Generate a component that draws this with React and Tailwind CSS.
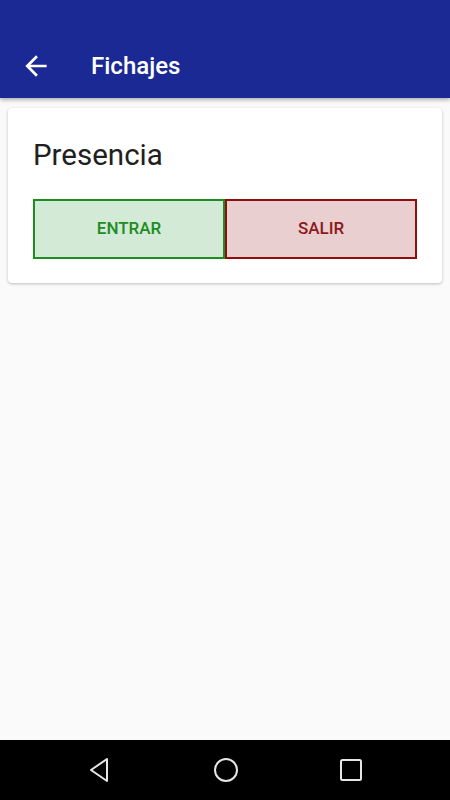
export default function App() {
  return (
    <div className="flex h-[800px] w-[450px] flex-col bg-[#fafafa] font-['Roboto',sans-serif]">
      {/* App bar */}
      <header className="relative z-10 flex h-[98px] shrink-0 items-center bg-[#1a2994] pt-[33px] shadow-[0_2px_4px_rgba(0,0,0,0.3)]">
        <svg viewBox="0 0 24 24" className="ml-[20px] h-[32px] w-[32px] fill-white">
          <path d="M20 11H7.83l5.59-5.59L12 4l-8 8 8 8 1.41-1.41L7.83 13H20v-2z" />
        </svg>
        <h1 className="ml-[39px] font-['Roboto_Medium','Roboto',sans-serif] text-[24px] font-medium leading-[28px] text-white">
          Fichajes
        </h1>
      </header>

      {/* Content */}
      <main className="flex-1 px-2 pt-[10px]">
        <div className="rounded-[4px] bg-white px-[25px] pt-[30px] pb-[24px] shadow-[0_1px_3px_rgba(0,0,0,0.25)]">
          <h2 className="text-[29.5px] leading-[34px] text-[#202020]">Presencia</h2>
          <div className="mt-[27px] flex h-[60px] font-['Roboto_Medium','Roboto',sans-serif] text-[17px] font-medium">
            <button className="flex flex-1 items-center justify-center border-2 border-[#1a8f1f] bg-[#d3ebd6] text-[#1f8c25]">
              ENTRAR
            </button>
            <button className="flex flex-1 items-center justify-center border-2 border-[#900d0d] bg-[#e9cfd0] text-[#8e1a1d]">
              SALIR
            </button>
          </div>
        </div>
      </main>

      {/* Navigation bar */}
      <nav className="flex h-[60px] shrink-0 items-center justify-center gap-[101px] bg-black">
        <svg viewBox="0 0 24 26" className="h-[26px] w-[24px]">
          <path d="M19 2 L3 13 L19 24 Z" fill="none" stroke="#e6e6e6" strokeWidth="2" strokeLinejoin="round" />
        </svg>
        <svg viewBox="0 0 26 26" className="h-[26px] w-[26px]">
          <circle cx="13" cy="13" r="11" fill="none" stroke="#e6e6e6" strokeWidth="2" />
        </svg>
        <svg viewBox="0 0 22 22" className="h-[22px] w-[22px]">
          <rect x="1" y="1" width="20" height="20" rx="1.5" fill="none" stroke="#e6e6e6" strokeWidth="2" />
        </svg>
      </nav>
    </div>
  );
}
